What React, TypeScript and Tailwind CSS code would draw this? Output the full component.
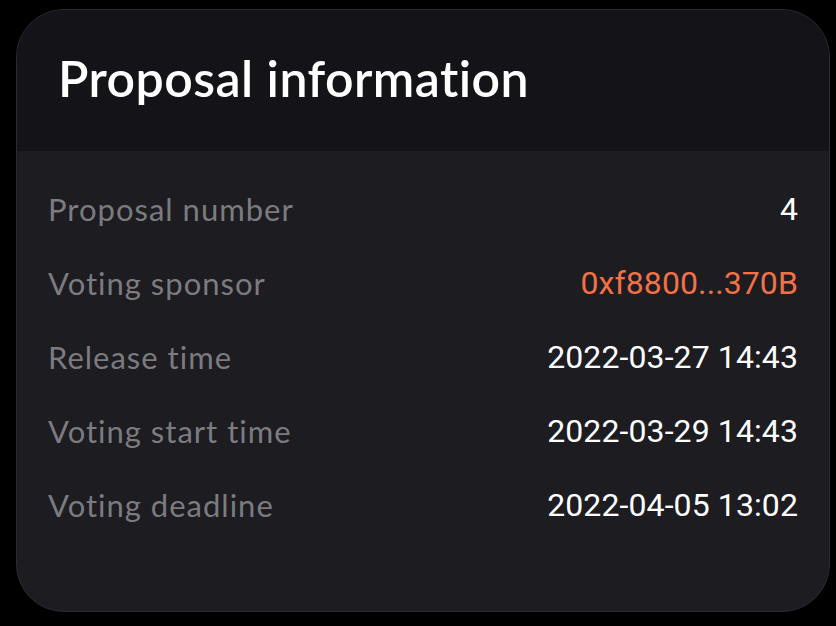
const rows: { label: string; value: string; accent?: boolean }[] = [
  { label: 'Proposal number', value: '4' },
  { label: 'Voting sponsor', value: '0xf8800...370B', accent: true },
  { label: 'Release time', value: '2022-03-27 14:43' },
  { label: 'Voting start time', value: '2022-03-29 14:43' },
  { label: 'Voting deadline', value: '2022-04-05 13:02' },
];

export default function App() {
  return (
    <div className="w-[836px] h-[626px] bg-black pt-[9px] pl-[16px] pr-[6px]">
      <div className="h-[603px] rounded-[48px] border border-[#2c2c30] bg-[#1c1c21] overflow-hidden flex flex-col">
        <div className="h-[141px] bg-[#141418] px-[41px] pt-[38px]">
          <h1 className="text-[50px] leading-[60px] tracking-[0.45px] font-semibold text-white font-['Lato',sans-serif]">
            Proposal information
          </h1>
        </div>
        <div className="px-[31px] pt-[21px] flex flex-col">
          {rows.map((row) => (
            <div key={row.label} className="flex items-center justify-between h-[74px]">
              <span className="text-[31px] tracking-[1px] text-[#7b7b80] font-['Lato',sans-serif]">{row.label}</span>
              <span
                className={`text-[32px] tracking-[0.1px] font-normal font-['Roboto',sans-serif] ${row.accent ? 'text-[#f27147]' : 'text-white'}`}
              >
                {row.value}
              </span>
            </div>
          ))}
        </div>
      </div>
    </div>
  );
}
